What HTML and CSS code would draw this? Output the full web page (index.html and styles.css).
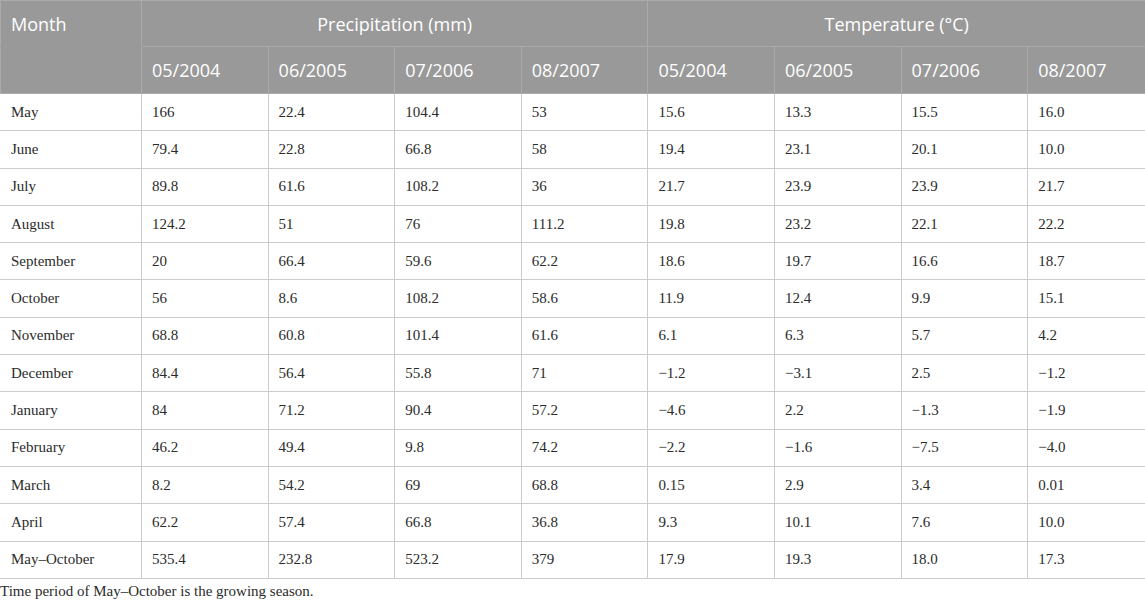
FILE: index.html
```html
<!DOCTYPE html>
<html lang="en">
<head>
    <meta charset="UTF-8">
    <title>Precipitation and Temperature</title>
    <link rel="stylesheet" href="styles.css">
</head>
<body>
    <table class="data-table">
        <colgroup>
            <col class="col-month">
            <col span="7" class="col-val">
            <col class="col-last">
        </colgroup>
        <thead>
            <tr class="head-top">
                <th class="th-month">Month</th>
                <th colspan="4" class="th-group">Precipitation (mm)</th>
                <th colspan="4" class="th-group">Temperature (&deg;C)</th>
            </tr>
            <tr class="head-sub">
                <th></th>
                <th>05/2004</th>
                <th>06/2005</th>
                <th>07/2006</th>
                <th>08/2007</th>
                <th>05/2004</th>
                <th>06/2005</th>
                <th>07/2006</th>
                <th>08/2007</th>
            </tr>
        </thead>
        <tbody>
            <tr><td>May</td><td>166</td><td>22.4</td><td>104.4</td><td>53</td><td>15.6</td><td>13.3</td><td>15.5</td><td>16.0</td></tr>
            <tr><td>June</td><td>79.4</td><td>22.8</td><td>66.8</td><td>58</td><td>19.4</td><td>23.1</td><td>20.1</td><td>10.0</td></tr>
            <tr><td>July</td><td>89.8</td><td>61.6</td><td>108.2</td><td>36</td><td>21.7</td><td>23.9</td><td>23.9</td><td>21.7</td></tr>
            <tr><td>August</td><td>124.2</td><td>51</td><td>76</td><td>111.2</td><td>19.8</td><td>23.2</td><td>22.1</td><td>22.2</td></tr>
            <tr><td>September</td><td>20</td><td>66.4</td><td>59.6</td><td>62.2</td><td>18.6</td><td>19.7</td><td>16.6</td><td>18.7</td></tr>
            <tr><td>October</td><td>56</td><td>8.6</td><td>108.2</td><td>58.6</td><td>11.9</td><td>12.4</td><td>9.9</td><td>15.1</td></tr>
            <tr><td>November</td><td>68.8</td><td>60.8</td><td>101.4</td><td>61.6</td><td>6.1</td><td>6.3</td><td>5.7</td><td>4.2</td></tr>
            <tr><td>December</td><td>84.4</td><td>56.4</td><td>55.8</td><td>71</td><td>&minus;1.2</td><td>&minus;3.1</td><td>2.5</td><td>&minus;1.2</td></tr>
            <tr><td>January</td><td>84</td><td>71.2</td><td>90.4</td><td>57.2</td><td>&minus;4.6</td><td>2.2</td><td>&minus;1.3</td><td>&minus;1.9</td></tr>
            <tr><td>February</td><td>46.2</td><td>49.4</td><td>9.8</td><td>74.2</td><td>&minus;2.2</td><td>&minus;1.6</td><td>&minus;7.5</td><td>&minus;4.0</td></tr>
            <tr><td>March</td><td>8.2</td><td>54.2</td><td>69</td><td>68.8</td><td>0.15</td><td>2.9</td><td>3.4</td><td>0.01</td></tr>
            <tr><td>April</td><td>62.2</td><td>57.4</td><td>66.8</td><td>36.8</td><td>9.3</td><td>10.1</td><td>7.6</td><td>10.0</td></tr>
            <tr><td>May&ndash;October</td><td>535.4</td><td>232.8</td><td>523.2</td><td>379</td><td>17.9</td><td>19.3</td><td>18.0</td><td>17.3</td></tr>
        </tbody>
    </table>
    <p class="footnote">Time period of May&ndash;October is the growing season.</p>
</body>
</html>
```

FILE: styles.css
```css
* {
    margin: 0;
    padding: 0;
    box-sizing: border-box;
}

body {
    font-family: 'Liberation Serif', 'Times New Roman', serif;
    background: #ffffff;
    color: #2b2b2b;
}

.data-table {
    width: 1145px;
    border-collapse: collapse;
    table-layout: fixed;
}

.col-month {
    width: 141px;
}

.col-val {
    width: 126.6px;
}

.col-last {
    width: 117.8px;
}

.data-table th {
    background: #999999;
    color: #ffffff;
    font-family: 'Open Sans', 'Noto Sans', sans-serif;
    font-weight: normal;
    font-size: 18px;
    text-align: left;
    padding: 0 10px;
    border: 1px solid #aaaaaa;
}

.head-top th {
    height: 46px;
}

.head-sub th {
    height: 47px;
}

.data-table th.th-group {
    text-align: center;
}

.data-table th.th-month {
    vertical-align: middle;
    border-bottom-color: #999999;
}

.head-sub th:first-child {
    border-top-color: #999999;
}

.data-table td {
    height: 37.3px;
    padding: 0 10px;
    font-size: 15px;
    border: 1px solid #cccccc;
    white-space: nowrap;
}

.data-table tr td:first-child {
    border-left-color: #ffffff;
}

.footnote {
    font-size: 15px;
    margin-top: 4px;
    color: #2b2b2b;
}
```
